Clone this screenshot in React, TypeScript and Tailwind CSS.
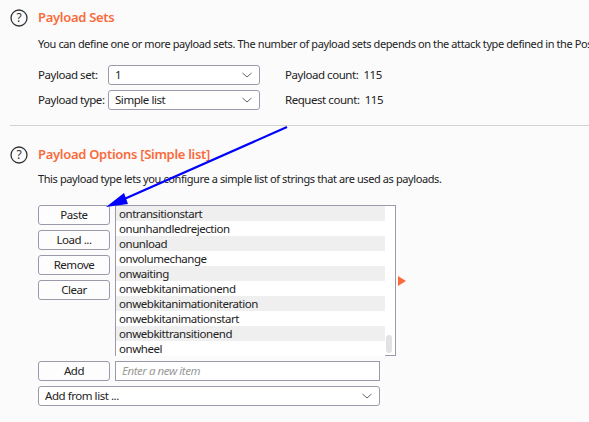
import React from "react";

const font = { fontFamily: '"Noto Sans", "Open Sans", sans-serif' };

function QIcon() {
  return (
    <svg width="18" height="18" viewBox="0 0 18 18" className="shrink-0">
      <circle cx="9" cy="9" r="8" fill="none" stroke="#333" strokeWidth="1.3" />
      <text x="9" y="13.2" textAnchor="middle" fontSize="12" fill="#333" fontFamily="Noto Sans, sans-serif">?</text>
    </svg>
  );
}

function Chevron() {
  return (
    <svg width="12" height="8" viewBox="0 0 12 8">
      <path d="M1.5 2 L6 6 L10.5 2" fill="none" stroke="#666" strokeWidth="1" />
    </svg>
  );
}

function Select({ value, w }: { value: string; w: string }) {
  return (
    <div className={`${w} h-[20px] border border-[#9c9aaa] rounded-[3px] bg-white flex items-center justify-between pl-[6px] pr-[6px]`}>
      <span>{value}</span>
      <Chevron />
    </div>
  );
}

function Btn({ label }: { label: string }) {
  return (
    <div className="w-[72px] h-[20px] border border-[#9c9aaa] rounded-[3px] bg-[#fdfdfd] flex items-center justify-center">
      {label}
    </div>
  );
}

const items = [
  "ontransitionstart",
  "onunhandledrejection",
  "onunload",
  "onvolumechange",
  "onwaiting",
  "onwebkitanimationend",
  "onwebkitanimationiteration",
  "onwebkitanimationstart",
  "onwebkittransitionend",
  "onwheel",
];

export default function App() {
  return (
    <div className="relative w-[589px] h-[422px] overflow-hidden bg-[#fbfbfb] text-[11.5px] text-[#222] tracking-[-0.45px]" style={font}>
      {/* Payload Sets */}
      <div className="pl-[10px] pt-[9px]">
        <div className="flex items-center gap-[10px] h-[18px]">
          <QIcon />
          <span className="text-[13px] font-semibold text-[#f96b3c] tracking-[-0.3px]">Payload Sets</span>
        </div>
        <div className="pl-[28px] mt-[8px] whitespace-nowrap h-[18px] leading-[18px] text-[11px] tracking-[-0.4px]">
          You can define one or more payload sets. The number of payload sets depends on the attack type defined in the Positions tab.
        </div>
        <div className="pl-[28px] mt-[12px] flex flex-col gap-[5px]">
          <div className="flex items-center h-[20px] whitespace-nowrap">
            <span className="w-[70px]">Payload set:</span>
            <Select value="1" w="w-[152px]" />
            <span className="ml-[25px]">Payload count:&nbsp; 115</span>
          </div>
          <div className="flex items-center h-[20px] whitespace-nowrap">
            <span className="w-[70px]">Payload type:</span>
            <Select value="Simple list" w="w-[152px]" />
            <span className="ml-[25px]">Request count:&nbsp; 115</span>
          </div>
        </div>
      </div>
      <div className="ml-[10px] mt-[15px] h-[1px] bg-[#d2d2d2]" />

      {/* Payload Options */}
      <div className="pl-[10px] pt-[20px]">
        <div className="flex items-center gap-[10px] h-[18px]">
          <QIcon />
          <span className="text-[13px] font-semibold text-[#f96b3c] tracking-[-0.3px]">Payload Options [Simple list]</span>
        </div>
        <div className="pl-[28px] mt-[6px] whitespace-nowrap h-[18px] leading-[18px] text-[11px] tracking-[-0.4px]">
          This payload type lets you configure a simple list of strings that are used as payloads.
        </div>
        <div className="pl-[28px] mt-[17px] flex items-start">
          <div className="flex flex-col gap-[5px]">
            <Btn label="Paste" />
            <Btn label="Load ..." />
            <Btn label="Remove" />
            <Btn label="Clear" />
          </div>
          <div className="ml-[5px] w-[281px] h-[151px] border border-[#9c9aaa] bg-white flex">
            <div className="flex-1 flex flex-col">
              {items.map((t, i) => (
                <div key={t} className={`h-[15px] leading-[15px] pl-[3px] ${i % 2 === 0 ? "bg-[#efefef]" : "bg-white"}`}>
                  {t}
                </div>
              ))}
            </div>
            <div className="w-[10px] flex flex-col justify-end pb-[2px] pl-[1px]">
              <div className="w-[6px] h-[18px] rounded-[3px] bg-[#e2e2e2]" />
            </div>
          </div>
          <div className="ml-[2px] mt-[71px]">
            <svg width="8" height="10" viewBox="0 0 8 10">
              <path d="M0 0 L8 5 L0 10 Z" fill="#f96b3c" />
            </svg>
          </div>
        </div>
        <div className="pl-[28px] mt-[5px] flex items-center">
          <Btn label="Add" />
          <div className="ml-[5px] w-[265px] h-[20px] border border-[#9c9aaa] bg-white flex items-center pl-[6px] italic text-[#999]">
            Enter a new item
          </div>
        </div>
        <div className="pl-[28px] mt-[5px]">
          <Select value="Add from list ..." w="w-[342px]" />
        </div>
      </div>

      {/* annotation arrow */}
      <svg className="absolute left-0 top-0 pointer-events-none" width="589" height="422">
        <line x1="287" y1="127" x2="122" y2="200" stroke="#0000ff" strokeWidth="2.2" />
        <path d="M106 207 L124 193 L128 204 Z" fill="#0000ff" />
      </svg>
    </div>
  );
}
